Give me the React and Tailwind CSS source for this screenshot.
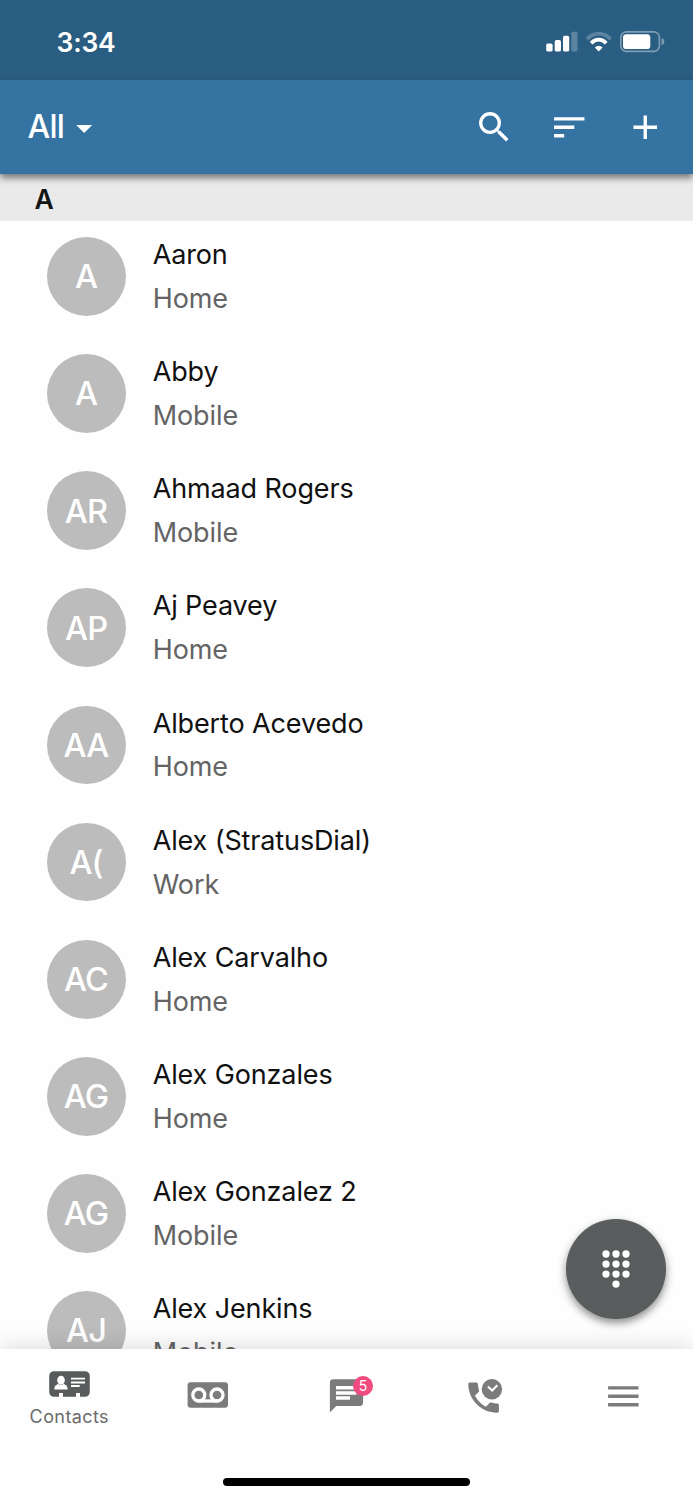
import { MdAdd, MdArrowDropDown, MdMenu, MdSearch, MdSort } from 'react-icons/md';

const contacts = [
  ['A', 'Aaron', 'Home'],
  ['A', 'Abby', 'Mobile'],
  ['AR', 'Ahmaad Rogers', 'Mobile'],
  ['AP', 'Aj Peavey', 'Home'],
  ['AA', 'Alberto Acevedo', 'Home'],
  ['A(', 'Alex (StratusDial)', 'Work'],
  ['AC', 'Alex Carvalho', 'Home'],
  ['AG', 'Alex Gonzales', 'Home'],
  ['AG', 'Alex Gonzalez 2', 'Mobile'],
  ['AJ', 'Alex Jenkins', 'Mobile'],
];

function StatusBar() {
  return (
    <div className="flex h-20 items-start justify-between bg-[#2a5d82] pl-[56.5px] pr-7 text-white">
      <span className="mt-[22px] text-[26.5px] font-semibold leading-10 tracking-[-0.2px]">3:34</span>
      <div className="mt-[30px] flex items-start">
        <svg width="119" height="24" viewBox="546 30 119 24" fill="#fff">
          <rect x="546.2" y="43.6" width="6.4" height="8" rx="1.7" />
          <rect x="554.7" y="40" width="6.3" height="11.6" rx="1.7" />
          <rect x="563" y="35.8" width="6.2" height="15.8" rx="1.7" />
          <rect x="571.3" y="31.8" width="6.2" height="19.8" rx="1.7" opacity=".24" />
          <g fill="none" stroke="#fff">
            <path d="M587 39.2C593.6 31.9 603.8 31.9 610.6 39.2" strokeWidth="3.7" opacity=".24" />
            <path d="M591.2 43.3C595.6 38.5 601.8 38.5 606.2 43.3" strokeWidth="3.8" />
          </g>
          <path d="M594.8 47.5Q598.7 44 602.6 47.5L598.7 51.4Z" />
          <rect x="620.8" y="31.9" width="38.6" height="19.5" rx="5.6" fill="none" stroke="#fff" strokeWidth="1.6" opacity=".4" />
          <rect x="623" y="34.2" width="27.3" height="14.9" rx="3.4" />
          <path d="M661.6 38.1Q664.4 39 664.4 41.7Q664.4 44.4 661.6 45.3Z" opacity=".4" />
        </svg>
      </div>
    </div>
  );
}

function AppBar() {
  return (
    <header className="relative z-10 flex h-[94px] items-center justify-between bg-[#3573a3] px-[27.5px] text-white shadow-[0_4px_7px_rgba(0,0,0,0.5)]">
      <button className="flex items-center text-[32px] font-medium tracking-[-0.7px]">
        <span>All</span>
        <MdArrowDropDown size={38.4} className="ml-px mt-[3px]" />
      </button>
      <div className="flex items-center gap-[35px]">
        <MdSearch size={40.5} />
        <MdSort size={40.5} className="-ml-px mr-px" />
        <MdAdd size={40.5} />
      </div>
    </header>
  );
}

function Contact({ initials, name, label }) {
  return (
    <li className="flex h-[117.15px] items-start pl-[47px] pt-[13px]">
      <div className="mt-[3px] flex size-[78.7px] items-center justify-center rounded-full bg-[#bcbcbc] pr-[0.5px] pt-[2.5px] text-[32.5px] font-medium tracking-[-0.8px] text-white">
        {initials}
      </div>
      <div className="ml-[27px] text-[27px]">
        <p className="leading-[42.9px] tracking-[-0.13px] text-[#111]">{name}</p>
        <p className="leading-[44.1px] tracking-[-0.1px] text-[#646464]">{label}</p>
      </div>
    </li>
  );
}

function ContactsIcon() {
  return (
    <svg width="42" height="28" viewBox="48 1370 42 28" className="shrink-0">
      <path d="M54 1371.2h31a4.8 4.8 0 0 1 4.8 4.8v16a4.8 4.8 0 0 1-4.8 4.8h-5v-3.7h-4v3.7h-13v-3.7h-4v3.7h-5a4.8 4.8 0 0 1-4.8-4.8v-16a4.8 4.8 0 0 1 4.8-4.8z" fill="#585c5d" />
      <ellipse cx="61" cy="1380.3" rx="3.8" ry="4.5" fill="#fff" />
      <path d="M54.3 1389.5c0-3.5 1.4-4.7 4.3-5.6 1.5 1.6 3.3 1.6 4.8 0 2.9.9 4.3 2.1 4.3 5.6z" fill="#fff" />
      <path d="M71 1378.6h14M71 1382.5h14M71 1386h8.7" stroke="#fff" strokeWidth="1.9" />
    </svg>
  );
}

function VoicemailIcon() {
  return (
    <svg width="42" height="28" viewBox="187 1381 42 28" className="mb-px">
      <rect x="187.6" y="1382.3" width="40.4" height="25.5" rx="3" fill="#7b7b7b" />
      <g fill="none" stroke="#fff" strokeWidth="3.3">
        <circle cx="198.8" cy="1395" r="6" />
        <circle cx="217" cy="1395" r="6" />
        <path d="M198.8 1401h18.2" />
      </g>
    </svg>
  );
}

function MessagesIcon() {
  return (
    <svg width="46" height="40" viewBox="329 1374 46 40">
      <path d="M333.3 1379.2h26.4a3.4 3.4 0 0 1 3.4 3.4v20a3.4 3.4 0 0 1-3.4 3.4h-23.5l-6.3 6.5v-29.9a3.4 3.4 0 0 1 3.4-3.4z" fill="#7b7b7b" />
      <path d="M336 1387.7h20.5M336 1392.9h20.5M336 1398h14" stroke="#fff" strokeWidth="3.5" />
    </svg>
  );
}

function CallHistoryIcon() {
  return (
    <svg width="38" height="38" viewBox="466 1376 38 38" className="mb-px">
      <path d="M470 1382.5h6.2c1 0 1.6.6 1.7 1.6.1 2.2.5 4.2 1.1 6.1.2.6.1 1.3-.4 1.7l-3.7 3.8c2.4 4.7 6.3 8.5 11 11l3.7-3.7c.5-.5 1.1-.6 1.7-.4 1.9.6 3.9.9 6 1 1 .1 1.6.7 1.6 1.6v5.9c0 .9-.7 1.6-1.7 1.6-15.8 0-28.9-12.9-28.9-28.7 0-.9.7-1.5 1.7-1.5z" fill="#7b7b7b" />
      <circle cx="491.9" cy="1389.3" r="10.2" fill="#7b7b7b" />
      <path d="m487.9 1386.5 4.3 4 5.1-5.3" fill="none" stroke="#fff" strokeWidth="2" />
    </svg>
  );
}

function DialButton() {
  return (
    <button className="absolute left-[565.7px] top-[1218.6px] z-20 flex size-[100.3px] items-center justify-center rounded-full bg-[#5a5d5e] shadow-[0_4px_9px_rgba(0,0,0,0.45)]">
      <svg width="30" height="40" viewBox="0 0 30 40" fill="#fff">
        {[5, 15, 25].map((x) => [5, 15.1, 25.1].map((y) => <circle key={`${x}-${y}`} cx={x} cy={y} r="3.65" />))}
        <circle cx="15" cy="35.1" r="3.65" />
      </svg>
    </button>
  );
}

function TabBar() {
  return (
    <nav className="relative z-10 flex h-[151px] shrink-0 flex-col items-center justify-between bg-[#fefefe] pb-[14px] shadow-[0_0_24px_rgba(0,0,0,0.16)]">
      <div className="grid h-[93px] w-full grid-cols-5 items-center justify-items-center">
        <div className="flex flex-col items-center pt-[9px]">
          <ContactsIcon />
          <span className="mt-[5px] text-[18px] leading-7 tracking-[0.4px] text-[#6b6b6b]">Contacts</span>
        </div>
        <VoicemailIcon />
        <div className="relative mb-[3px] ml-[11px]">
          <MessagesIcon />
          <span className="absolute left-[24px] top-[2px] flex size-5 items-center justify-center rounded-full bg-[#ef4b7f] text-[14px] leading-none text-white">5</span>
        </div>
        <CallHistoryIcon />
        <MdMenu size={40.6} className="mt-px text-[#7b7b7b]" />
      </div>
      <div className="h-2 w-[247px] rounded-full bg-black" />
    </nav>
  );
}

export default function App() {
  return (
    <div className="relative flex h-[1500px] w-[693px] flex-col overflow-hidden bg-[#fefefe] font-['Inter',sans-serif]">
      <StatusBar />
      <AppBar />
      <main className="min-h-0 flex-1 overflow-hidden">
        <h2 className="h-[47px] bg-[#eaeaea] pl-[34.5px] text-[26.5px] font-semibold leading-[51px] text-[#151515]">A</h2>
        <ul>
          {contacts.map(([initials, name, label]) => (
            <Contact key={name} initials={initials} name={name} label={label} />
          ))}
        </ul>
      </main>
      <TabBar />
      <DialButton />
    </div>
  );
}
